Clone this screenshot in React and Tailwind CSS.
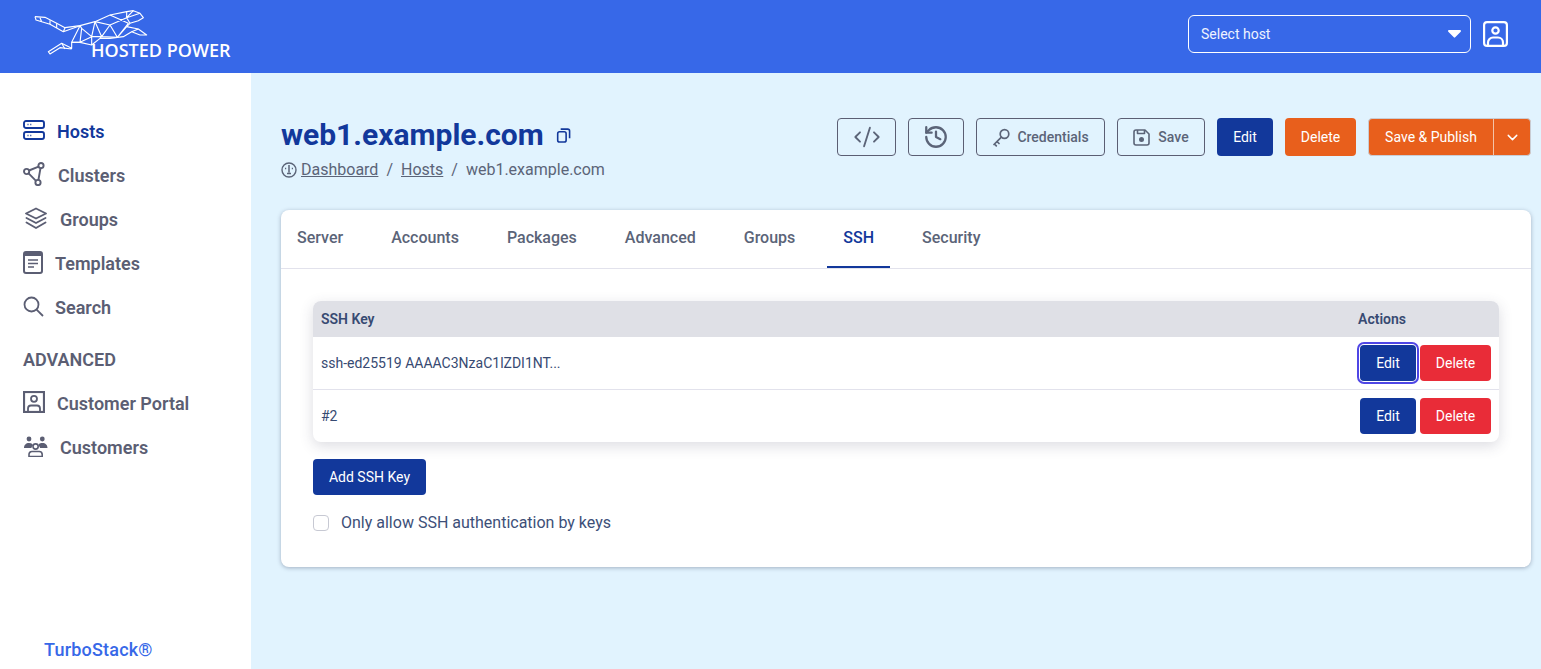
import { ChevronDown, CodeXml, History } from 'lucide-react';

// traced from the logo, in 3x coordinates
const Cheetah = () => (
  <svg width="125" height="55" viewBox="0 0 375 165" fill="none" stroke="#ffffff" strokeWidth="3.400" strokeLinejoin="round" className="absolute left-[30px] top-[5px]">
    <path d="M15 35L45 37L80 55L105 68L150 62L195 50L240 30L290 20L310 17L330 25L340 38L325 47L300 55L290 65L325 72L350 90L330 90L305 80L280 95L240 100L210 100L185 120L150 112L125 112L125 130L95 115L55 140L60 147L90 128L125 132" />
    <path d="M15 35L18 45L60 58L100 80L150 62M105 68L100 80M30 38L35 50M60 46L60 58M80 55L80 68" />
    <path d="M150 62L125 112L150 112L155 70L185 95L195 50L215 95L240 60L262 97L295 55L240 30M155 70L150 62M185 95L150 112M185 95L185 120M215 95L185 95M215 95L262 97M240 60L195 50M240 60L290 38L290 20M290 38L330 25M290 38L300 55M262 97L290 65M310 17L290 38M305 80L325 72M95 115L105 132M215 95L210 100M240 60L215 95" />
  </svg>
);

const HostsIcon = () => (
  <svg width="22" height="20" viewBox="0 0 22 20" fill="none" stroke="currentColor" strokeWidth="1.900">
    <rect x="1" y="1" width="20" height="7" rx="2" />
    <rect x="1" y="12" width="20" height="7" rx="2" />
    <path d="M4.500 4.500h1M7.300 4.500h1M4.500 15.500h1M7.300 15.500h1" strokeWidth="1.500" />
  </svg>
);

const ClustersIcon = () => (
  <svg width="22" height="24" viewBox="0 0 22 24" fill="none" stroke="currentColor" strokeWidth="1.900">
    <circle cx="3.600" cy="9.500" r="2.600" />
    <circle cx="18" cy="3.600" r="2.600" />
    <circle cx="15" cy="20.500" r="2.600" />
    <path d="M6 8.500L15.600 4.600M5.600 11.300L13 18.800M17.500 6.200L15.400 18" />
  </svg>
);

const GroupsIcon = () => (
  <svg width="24" height="23" viewBox="0 0 24 23" fill="none" stroke="currentColor" strokeWidth="1.900" strokeLinejoin="round" strokeLinecap="round">
    <path d="M12 1.500L22 6.500L12 11.500L2 6.500Z" />
    <path d="M2.500 11L12 16L21.500 11" />
    <path d="M2.500 15.500L12 21L21.500 15.500" />
  </svg>
);

const TemplatesIcon = () => (
  <svg width="20" height="23" viewBox="0 0 20 23" fill="none">
    <rect x="1" y="1" width="18" height="21" rx="2" stroke="currentColor" strokeWidth="2" />
    <path d="M1 3a2 2 0 012-2h14a2 2 0 012 2v2H1z" fill="currentColor" />
    <path d="M5 9h10M5 12.500h10M5 16h6" stroke="currentColor" strokeWidth="1.700" />
  </svg>
);

const SearchIcon = () => (
  <svg width="21" height="21" viewBox="0 0 21 21" fill="none" stroke="currentColor" strokeWidth="1.800">
    <circle cx="8.500" cy="8.500" r="7" />
    <path d="M13.600 13.600L20 20" />
  </svg>
);

const PortalIcon = () => (
  <svg width="22" height="22" viewBox="0 0 22 22" fill="none" stroke="currentColor" strokeWidth="2.200">
    <rect x="1" y="1" width="20" height="20" />
    <circle cx="11" cy="7.800" r="3" strokeWidth="1.800" />
    <path d="M5 20v-2.500a3 3 0 013-3h6a3 3 0 013 3V20" strokeWidth="1.800" />
  </svg>
);

const CustomersIcon = () => (
  <svg width="25" height="21" viewBox="0 0 25 21" fill="currentColor">
    <circle cx="6" cy="3" r="2.400" />
    <circle cx="19.300" cy="3" r="2.400" />
    <path d="M1 12c0-3 2-5 5-5s3.600 1 4 2.500c-1 .8-1.500 2-1.500 2.500zM24.500 12c0-3-2-5-5.200-5s-3.400 1-3.900 2.500c1 .8 1.600 2 1.600 2.500z" />
    <circle cx="12.600" cy="10.500" r="2.600" fill="none" stroke="currentColor" strokeWidth="1.600" />
    <path d="M6 20.500v-2a3 3 0 013-3h7.200a3 3 0 013 3v2z" fill="none" stroke="currentColor" strokeWidth="1.600" />
  </svg>
);

const CopyIcon = () => (
  <svg width="15" height="15" viewBox="0 0 16 16" fill="none" stroke="#12389b" strokeWidth="1.700" strokeLinejoin="round">
    <rect x="1.800" y="4" width="9" height="11" rx="2" />
    <path d="M5 1.200h7.500a2 2 0 012 2V11" />
  </svg>
);

const KeyIcon = () => (
  <svg width="19" height="19" viewBox="0 0 19 19" fill="none" stroke="currentColor" strokeWidth="1.700" strokeLinecap="round">
    <circle cx="12.500" cy="6" r="4.300" />
    <path d="M9.400 9.100L2 16.500M5 13.500l2 2M2.500 16l1.800 1.800" />
  </svg>
);

const SaveIcon = () => (
  <svg width="17" height="17" viewBox="0 0 17 17" fill="none" stroke="currentColor" strokeWidth="1.600" strokeLinejoin="round">
    <path d="M3 1h9l4 4v9a2 2 0 01-2 2H3a2 2 0 01-2-2V3a2 2 0 012-2z" />
    <path d="M4.500 1v3.500h7V1" />
    <circle cx="8.500" cy="10.500" r="1.700" fill="currentColor" />
  </svg>
);

const navItems = [
  { label: 'Hosts', icon: HostsIcon, gap: 'w-[34px]', active: true },
  { label: 'Clusters', icon: ClustersIcon, gap: 'w-[35px]' },
  { label: 'Groups', icon: GroupsIcon, gap: 'w-[37px]', inset: 'pl-[1px]' },
  { label: 'Templates', icon: TemplatesIcon, gap: 'w-[32px]' },
  { label: 'Search', icon: SearchIcon, gap: 'w-[32px]' },
];

const advancedItems = [
  { label: 'Customer Portal', icon: PortalIcon, gap: 'w-[34px]' },
  { label: 'Customers', icon: CustomersIcon, gap: 'w-[37px]' },
];

const NavRow = ({ item }) => {
  const Icon = item.icon;
  return (
    <div className={`flex h-[44px] items-center text-[18px] font-semibold ${item.active ? 'text-[#12389b]' : 'text-[#5b5e73]'}`}>
      <div className={`${item.gap} ${item.inset || ''} -mt-[2px] shrink-0`}><Icon /></div>
      <span>{item.label}</span>
    </div>
  );
};

const tabs = ['Server', 'Accounts', 'Packages', 'Advanced', 'Groups', 'SSH', 'Security'];

const outlineBtn = 'flex h-[38px] items-center justify-center rounded border border-[#5b5e73] text-[14px] font-medium text-[#5b6478]';

const Row = ({ text, focused }) => (
  <div className={`flex items-center justify-between px-2 text-[14px] text-[#374a72] ${focused ? 'h-[53px] border-b border-[#e2e2ec]' : 'h-[52px]'}`}>
    <span>{text}</span>
    <div className="flex gap-1">
      <button className={`h-9 w-14 rounded bg-[#12389b] text-[14px] text-white ${focused ? 'outline-2 outline-offset-1 outline-[#4f46e5]' : ''}`}>Edit</button>
      <button className="h-9 w-[71px] rounded bg-[#e92c38] text-[14px] text-white">Delete</button>
    </div>
  </div>
);

export default function App() {
  return (
    <div className="flex h-[669px] flex-col overflow-hidden bg-[#e1f3fe] font-['Roboto',sans-serif]">
      <header className="relative flex h-[73px] shrink-0 items-center justify-end bg-[#3768e8] pb-[5px] pr-[33px]">
        <Cheetah />
        <span className="absolute left-[91px] top-[38px] font-['Open_Sans',sans-serif] text-[18px] leading-6 font-semibold text-white">HOSTED POWER</span>
        <div className="flex h-[38px] w-[283px] items-center justify-between rounded-md border border-white pl-3 pr-[9px] text-[14px] text-[#eef3ff]">
          <span>Select host</span>
          <svg width="13" height="8" viewBox="0 0 13 8" className="fill-white"><path d="M1 0h11a1 1 0 01.7 1.700L7.200 7.300a1 1 0 01-1.400 0L.3 1.700A1 1 0 011 0z" /></svg>
        </div>
        <svg width="25" height="26" viewBox="0 0 25 26" fill="none" stroke="white" strokeWidth="2.200" className="ml-3">
          <rect x="1.100" y="1.100" width="22.800" height="23.800" rx="3" />
          <circle cx="12.500" cy="9.500" r="3.200" />
          <path d="M5 24v-2.500a5 5 0 015-5h5a5 5 0 015 5V24" />
        </svg>
      </header>

      <div className="flex min-h-0 flex-1">
        <aside className="flex w-[251px] shrink-0 flex-col bg-white pl-[23px] pt-9">
          {navItems.map(item => <NavRow key={item.label} item={item} />)}
          <div className="mt-5 mb-[11px] text-[18px] leading-[21px] font-semibold text-[#5b5e73]">ADVANCED</div>
          {advancedItems.map(item => <NavRow key={item.label} item={item} />)}
          <div className="mt-auto mb-[7px] ml-[21px] text-[18px] leading-[24px] font-medium tracking-[0.2px] text-[#3768e8]">TurboStack®</div>
        </aside>

        <main className="min-w-0 flex-1 pl-[30px] pr-[10px] pt-11">
          <div className="flex items-start justify-between">
            <div>
              <div className="flex items-center gap-3">
                <h1 className="text-[30px] leading-9 font-bold text-[#12389b]">web1.example.com</h1>
                <CopyIcon />
              </div>
              <div className="mt-[5px] flex items-center text-[16px] leading-6 text-[#5b6478]">
                <svg width="16" height="16" viewBox="0 0 16 16" fill="none" stroke="currentColor" strokeWidth="1.400" className="mr-[4px]">
                  <circle cx="8" cy="8" r="7" />
                  <path d="M8 3v7.500M4 6.500h1.200M10.800 6.500H12M6 11.500h4" strokeWidth="1.500" />
                </svg>
                <span className="underline">Dashboard</span>
                <span className="mx-2">/</span>
                <span className="underline">Hosts</span>
                <span className="mx-2">/</span>
                <span>web1.example.com</span>
              </div>
            </div>
            <div className="mt-[1px] flex items-center gap-3">
              <button className={`${outlineBtn} w-[59px]`}><CodeXml className="h-[28px] w-[30px]" strokeWidth={1.600} /></button>
              <button className={`${outlineBtn} w-14`}><History className="h-[26px] w-[26px]" strokeWidth={2.100} /></button>
              <button className={`${outlineBtn} w-[129px] gap-[6px]`}><KeyIcon />Credentials</button>
              <button className={`${outlineBtn} w-[88px] gap-2`}><SaveIcon />Save</button>
              <button className="h-[38px] w-14 rounded bg-[#12389b] text-[14px] text-white">Edit</button>
              <button className="h-[38px] w-[71px] rounded bg-[#e85f1c] text-[14px] text-white">Delete</button>
              <div className="flex h-[38px] w-[163px] overflow-hidden rounded border border-[#c9ccd3] bg-[#e85f1c] text-[14px] text-white">
                <button className="w-[125px] border-r border-[#f4c4a8]">Save &amp; Publish</button>
                <button className="flex flex-1 items-center justify-center"><ChevronDown className="h-[17px] w-[17px]" strokeWidth={2} /></button>
              </div>
            </div>
          </div>

          <section className="mt-7 h-[357px] rounded-lg bg-white shadow-[0_1px_4px_rgba(40,50,80,0.35)]">
            <div className="flex h-[59px] border-b border-[#e2e2ec]">
              {tabs.map(tab => (
                <div key={tab} className={`mr-4 flex items-center border-b-2 px-4 text-[16px] font-medium ${tab === 'SSH' ? 'border-[#12389b] text-[#12389b]' : 'border-transparent text-[#5b6478]'}`}>{tab}</div>
              ))}
            </div>
            <div className="px-8 pt-8">
              <div className="rounded-lg bg-white shadow-[0_4px_14px_rgba(60,60,90,0.18)]">
                <div className="flex h-9 items-center justify-between rounded-t-lg bg-[#dfe0e6] pl-2 pr-[93px] text-[14px] font-semibold text-[#374a72]">
                  <span>SSH Key</span>
                  <span>Actions</span>
                </div>
                <Row text="ssh-ed25519 AAAAC3NzaC1lZDI1NT..." focused />
                <Row text="#2" />
              </div>
              <button className="mt-[17px] block h-9 w-[113px] rounded bg-[#12389b] text-[14px] text-white">Add SSH Key</button>
              <div className="mt-4 flex items-center text-[16px] leading-6 text-[#3d4f78]">
                <span className="h-4 w-4 rounded border border-[#c7c9d3] bg-white" />
                <span className="ml-3">Only allow SSH authentication by keys</span>
              </div>
            </div>
          </section>
        </main>
      </div>
    </div>
  );
}
